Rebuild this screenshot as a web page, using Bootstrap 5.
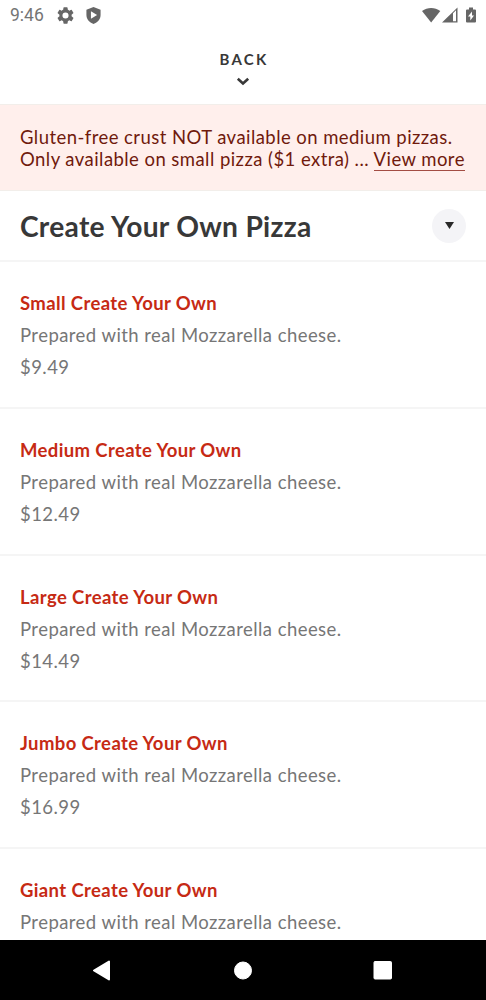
<!DOCTYPE html>
<html lang="en">
<head>
<meta charset="utf-8">
<meta name="viewport" content="width=device-width, initial-scale=1">
<title>Create Your Own Pizza</title>
<link rel="stylesheet" href="https://cdn.jsdelivr.net/npm/bootstrap@5.3.0/dist/css/bootstrap.min.css">
<style>
body{font-family:Lato,sans-serif;color:#767676;font-size:18.5px;line-height:22px;letter-spacing:.44px}
.status{height:31px;font:17.5px/31px Roboto,sans-serif;letter-spacing:0;color:#757575;padding-left:10px;padding-right:8px}
.status svg,.back svg,.sysnav svg{display:block;flex:none}
.gear{margin-left:13px}
.shield{margin-left:12px}
.back{height:73px;padding-top:20px;font-size:15px;line-height:16px;font-weight:700;letter-spacing:2.2px;color:#383838}
.back span{padding-left:2px}
.caret{margin-top:10px}
.notice{height:87px;padding:21px 20px 0;background:#ffefec;color:#701a0c;border-top:1px solid #f2eeea;border-bottom:1px solid #f2eeea;white-space:nowrap;letter-spacing:.44px}
.notice a{color:inherit;text-decoration:none;box-shadow:0 1px #a34d43}
.heading{height:71px;padding:0 20px;border-bottom:2px solid #f5f5f5}
.heading h1{font-size:28.2px;line-height:34px;font-weight:700;letter-spacing:.27px;color:#383838}
.toggle{width:34px;height:34px;background:#f4f4f7}
.list-group-flush>.menu-item{height:146.8px;padding:30px 20px 0;border:0;border-bottom:2px solid #f5f5f5;color:#767676;background:#fff}
.menu-item h2{font-size:18.5px;line-height:22px;font-weight:700;letter-spacing:.38px;color:#c62a14;margin-bottom:10px}
.menu-item p{margin-bottom:10px}
.sysnav{height:60px;background:#000}
</style>
</head>
<body class="bg-white">
<div class="d-flex flex-column vh-100 overflow-hidden">
  <header class="status d-flex align-items-center flex-shrink-0">
    <span>9:46</span>
    <svg class="gear" width="17" height="17" viewBox="2 2 20 20" fill="#666"><path d="M19.14 12.94c.04-.3.06-.61.06-.94s-.02-.64-.07-.94l2.03-1.58a.5.5 0 0 0 .12-.61l-1.92-3.32a.5.5 0 0 0-.59-.22l-2.39.96a7 7 0 0 0-1.62-.94l-.36-2.54a.5.5 0 0 0-.48-.41h-3.84a.5.5 0 0 0-.47.41l-.36 2.54a7 7 0 0 0-1.62.94l-2.39-.96a.5.5 0 0 0-.59.22L2.74 8.87a.5.5 0 0 0 .12.61l2.03 1.58a7 7 0 0 0 0 1.88l-2.03 1.58a.5.5 0 0 0-.12.61l1.92 3.32c.12.22.37.29.59.22l2.39-.96c.5.38 1.03.7 1.62.94l.36 2.54c.05.24.24.41.48.41h3.84c.24 0 .44-.17.47-.41l.36-2.54a7 7 0 0 0 1.62-.94l2.39.96c.22.08.47 0 .59-.22l1.92-3.32a.5.5 0 0 0-.12-.61zM12 15.6a3.6 3.6 0 1 1 0-7.2 3.6 3.6 0 0 1 0 7.2z"/></svg>
    <svg class="shield" width="15" height="17" viewBox="0 0 15 18"><path fill="#666" d="M7.5 0 15 3v5.500c0 4.300-3 7.800-7.500 9.500C3 16.300 0 12.800 0 8.500V3z"/><path fill="#fff" d="M4.800 4.500v8l6.500-4z"/></svg>
    <svg class="ms-auto" width="56" height="18" viewBox="0 0.500 56 18" fill="#666"><path d="M0 4.500C5.500.4 12.800.4 18.300 4.500L9.150 16z"/><path fill-rule="evenodd" d="M20 16 35.500 1v15zM31 6.800V14.700h3V3.800z"/><path d="M45 3h2V1h4v2h2q1 0 1 1v11q0 1-1 1h-8q-1 0-1-1V4q0-1 1-1z"/><path fill="#fff" d="m50 5-4 5h2.300v4L52 9h-2z"/></svg>
  </header>
  <nav class="back d-flex flex-column align-items-center flex-shrink-0">
    <span>BACK</span>
    <svg class="caret" width="14" height="9" viewBox="0 0 14 9" fill="none" stroke="#383838" stroke-width="2.600"><path d="m1.800 1.800 5.200 4.700 5.200-4.700"/></svg>
  </nav>
  <div class="notice flex-shrink-0">Gluten-free crust NOT available on medium pizzas.<br>Only available on small pizza ($1 extra) ... <a href="#">View more</a></div>
  <div class="heading d-flex align-items-center justify-content-between flex-shrink-0">
    <h1 class="m-0">Create Your Own Pizza</h1>
    <button class="toggle btn rounded-circle border-0 p-0 d-flex align-items-center justify-content-center" aria-label="Choose category"><svg width="9" height="7" viewBox="0 0 9 7"><path fill="#292929" d="M0 0h9L4.500 7z"/></svg></button>
  </div>
  <main class="list-group list-group-flush flex-grow-1 overflow-hidden">
    <section class="menu-item list-group-item flex-shrink-0"><h2>Small Create Your Own</h2><p>Prepared with real Mozzarella cheese.</p><div>$9.49</div></section>
    <section class="menu-item list-group-item flex-shrink-0"><h2>Medium Create Your Own</h2><p>Prepared with real Mozzarella cheese.</p><div>$12.49</div></section>
    <section class="menu-item list-group-item flex-shrink-0"><h2>Large Create Your Own</h2><p>Prepared with real Mozzarella cheese.</p><div>$14.49</div></section>
    <section class="menu-item list-group-item flex-shrink-0"><h2>Jumbo Create Your Own</h2><p>Prepared with real Mozzarella cheese.</p><div>$16.99</div></section>
    <section class="menu-item list-group-item flex-shrink-0"><h2>Giant Create Your Own</h2><p>Prepared with real Mozzarella cheese.</p></section>
  </main>
  <footer class="sysnav flex-shrink-0 d-flex justify-content-center align-items-center">
    <svg width="300" height="22" viewBox="0 0 300 22" fill="#fff" stroke="#fff" stroke-linejoin="round"><path stroke-width="2" d="M1 11.500 16 2.500v18z"/><circle cx="150" cy="11.500" r="8.500"/><rect x="281" y="2.500" width="17.500" height="17.500" rx="1"/></svg>
  </footer>
</div>
<script src="https://cdn.jsdelivr.net/npm/bootstrap@5.3.0/dist/js/bootstrap.bundle.min.js"></script>
</body>
</html>
